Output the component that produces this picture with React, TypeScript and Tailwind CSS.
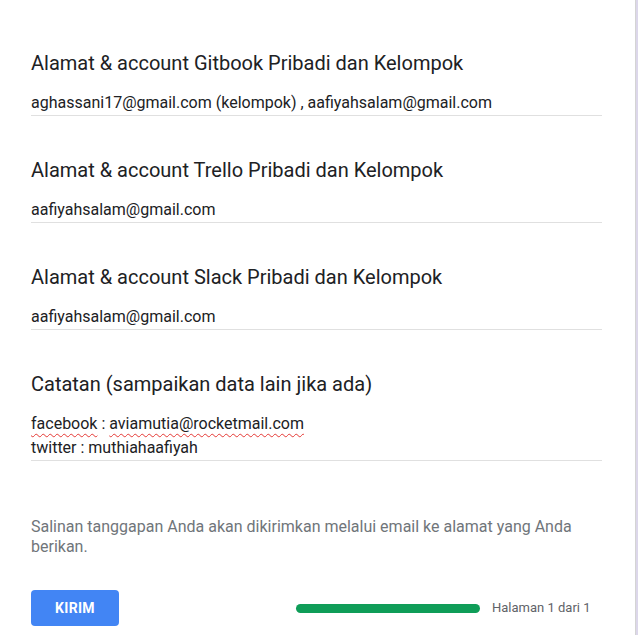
import React from "react";

const font = { fontFamily: "Roboto, 'Liberation Sans', sans-serif" };

function Section({ title, children, first }: { title: string; children: React.ReactNode; first?: boolean }) {
  return (
    <div className={first ? "" : "mt-[42px]"}>
      <div className="text-[20px] leading-[24px] text-[#202124]">{title}</div>
      <div className="mt-[16px] border-b border-[#e0e0e0] text-[16px] leading-[24px] text-[#202124]">
        {children}
      </div>
    </div>
  );
}

export default function App() {
  return (
    <div style={font} className="w-[639px] h-[635px] bg-white flex overflow-hidden">
      <div className="w-[636px] h-full bg-white border-r border-[#d4d4d4]">
        <div className="pl-[31px] pr-[33px] pt-[51px]">
          <Section title="Alamat & account Gitbook Pribadi dan Kelompok" first>
            aghassani17@gmail.com (kelompok) , aafiyahsalam@gmail.com
          </Section>
          <Section title="Alamat & account Trello Pribadi dan Kelompok">aafiyahsalam@gmail.com</Section>
          <Section title="Alamat & account Slack Pribadi dan Kelompok">aafiyahsalam@gmail.com</Section>
          <Section title="Catatan (sampaikan data lain jika ada)">
            <div>
              <span className="underline decoration-wavy decoration-[#e53935] decoration-1 underline-offset-[4px]">facebook</span>
              {" : "}
              <span className="underline decoration-wavy decoration-[#e53935] decoration-1 underline-offset-[4px]">aviamutia@rocketmail.com</span>
            </div>
            <div>twitter : muthiahaafiyah</div>
          </Section>
          <div className="mt-[56px] text-[16px] leading-[20px] text-[#70757a]">
            Salinan tanggapan Anda akan dikirimkan melalui email ke alamat yang Anda berikan.
          </div>
          <div className="mt-[33px] flex items-center">
            <button className="w-[88px] h-[36px] rounded-[4px] bg-[#4285f4] text-white text-[14px] font-bold tracking-[0.3px]">
              KIRIM
            </button>
            <div className="ml-[177px] w-[184px] h-[9px] rounded-full bg-[#0f9d58]" />
            <div className="ml-[12px] text-[13px] text-[#5f6368]">Halaman 1 dari 1</div>
          </div>
        </div>
      </div>
      <div className="w-[2px] h-full bg-[#dcd7ea]" />
    </div>
  );
}
